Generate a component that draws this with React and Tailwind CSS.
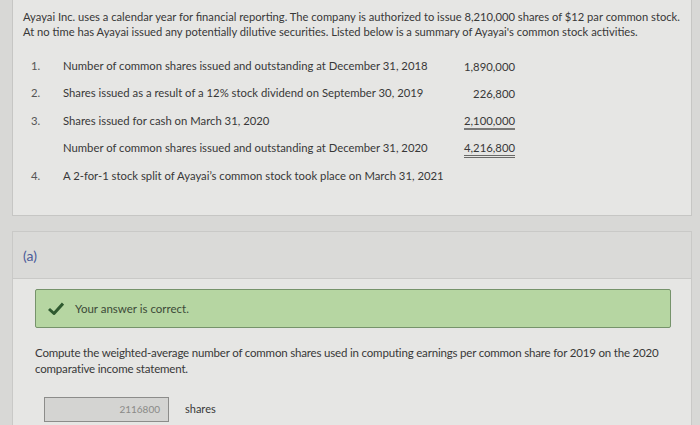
import React from 'react';

const rows = [
  { n: '1.', text: 'Number of common shares issued and outstanding at December 31, 2018', value: '1,890,000', line: '' },
  { n: '2.', text: 'Shares issued as a result of a 12% stock dividend on September 30, 2019', value: '226,800', line: '' },
  { n: '3.', text: 'Shares issued for cash on March 31, 2020', value: '2,100,000', line: 'border-b-2 border-[#7a7a78]' },
  { n: '', text: 'Number of common shares issued and outstanding at December 31, 2020', value: '4,216,800', line: 'border-b-[3px] border-double border-[#6a6a68]' },
  { n: '4.', text: 'A 2-for-1 stock split of Ayayai\u2019s common stock took place on March 31, 2021', value: '', line: '' },
];

const Check = () => (
  <svg width="16" height="13" viewBox="0 0 16 13">
    <path d="M1 7 L6 11.5 L15 1.5" fill="none" stroke="#2f5a30" strokeWidth="3" strokeLinejoin="round" />
  </svg>
);

export default function App() {
  return (
    <div className="w-[700px] h-[425px] overflow-hidden bg-[#d8d8d6] pl-[12px] pr-[8px] font-['Lato','Liberation_Sans',sans-serif] text-[#383838]">
      {/* problem statement */}
      <div className="h-[216px] bg-[#e6e6e4] border border-t-0 border-[#c6c6c4] pl-[10px] pt-[9px]">
        <p className="text-[11.2px] leading-[15px]">
          Ayayai Inc. uses a calendar year for financial reporting. The company is authorized to issue 8,210,000 shares of $12 par common stock.
          <br />
          At no time has Ayayai issued any potentially dilutive securities. Listed below is a summary of Ayayai's common stock activities.
        </p>
        <div className="mt-[19px] flex flex-col gap-[11.5px]">
          {rows.map((r, i) => (
            <div key={i} className="flex items-center h-[16px] text-[11.3px]">
              <span className="w-[40px] pl-[8px] text-[#555]">{r.n}</span>
              <span className="w-[392px]">{r.text}</span>
              <span className="w-[60px] flex justify-end">
                {r.value && <span className={`leading-[15px] ${r.line}`}>{r.value}</span>}
              </span>
            </div>
          ))}
        </div>
      </div>

      {/* part (a) header */}
      <div className="mt-[15px] h-[47px] bg-[#dadad8] border-t border-x border-[#c9c9c7] flex items-center pl-[10px]">
        <span className="text-[14px] text-[#4b5a98]">(a)</span>
      </div>

      {/* part (a) body */}
      <div className="h-[200px] bg-[#e6e6e4] border-x border-t border-[#c9c9c7] px-[22px] pt-[10px]">
        <div className="h-[39px] w-[636px] bg-[#b6d6a2] border border-[#76936b] rounded-[2px] flex items-center pl-[12px]">
          <Check />
          <span className="ml-[11px] text-[11.5px] text-[#3c4a38]">Your answer is correct.</span>
        </div>
        <p className="mt-[17px] text-[11.5px] leading-[16px] tracking-[-0.18px] w-[650px]">
          Compute the weighted-average number of common shares used in computing earnings per common share for 2019 on the 2020 comparative income statement.
        </p>
        <div className="mt-[20px] ml-[9px] flex items-center">
          <div className="w-[125px] h-[25px] bg-[#d4d4d2] border border-[#8c8c8a] flex items-center justify-end pr-[8px] text-[10px] text-[#8a8a88]">
            2116800
          </div>
          <span className="ml-[16px] text-[11px]">shares</span>
        </div>
      </div>
    </div>
  );
}
